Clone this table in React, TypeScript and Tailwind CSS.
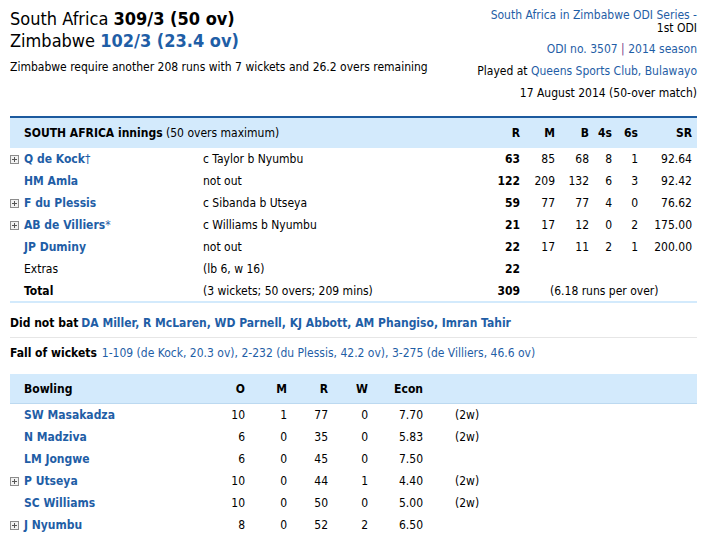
import React from 'react'

const font = "font-['DejaVu_Sans_Condensed','DejaVu_Sans',sans-serif]"
const blue = 'text-[#1f5ea6]'

const Plus = () => (
  <svg width="9" height="9" viewBox="0 0 9 9" className="block">
    <rect x="0.5" y="0.5" width="8" height="8" fill="#f2f2f2" stroke="#8c8c8c" />
    <path d="M2 4.5h5M4.5 2v5" stroke="#555" strokeWidth="1" />
  </svg>
)

type Bat = { name: string; mark?: string; how: string; r: string; m: string; b: string; f: string; s: string; sr: string; plus?: boolean }

const batting: Bat[] = [
  { name: 'Q de Kock', mark: '†', how: 'c Taylor b Nyumbu', r: '63', m: '85', b: '68', f: '8', s: '1', sr: '92.64', plus: true },
  { name: 'HM Amla', how: 'not out', r: '122', m: '209', b: '132', f: '6', s: '3', sr: '92.42' },
  { name: 'F du Plessis', how: 'c Sibanda b Utseya', r: '59', m: '77', b: '77', f: '4', s: '0', sr: '76.62', plus: true },
  { name: 'AB de Villiers', mark: '*', how: 'c Williams b Nyumbu', r: '21', m: '17', b: '12', f: '0', s: '2', sr: '175.00', plus: true },
  { name: 'JP Duminy', how: 'not out', r: '22', m: '17', b: '11', f: '2', s: '1', sr: '200.00' },
]

const bowling = [
  { name: 'SW Masakadza', o: '10', m: '1', r: '77', w: '0', e: '7.70', x: '(2w)' },
  { name: 'N Madziva', o: '6', m: '0', r: '35', w: '0', e: '5.83', x: '(2w)' },
  { name: 'LM Jongwe', o: '6', m: '0', r: '45', w: '0', e: '7.50', x: '' },
  { name: 'P Utseya', o: '10', m: '0', r: '44', w: '1', e: '4.40', x: '(2w)', plus: true },
  { name: 'SC Williams', o: '10', m: '0', r: '50', w: '0', e: '5.00', x: '(2w)' },
  { name: 'J Nyumbu', o: '8', m: '0', r: '52', w: '2', e: '6.50', x: '', plus: true },
]

const NameCell = ({ plus, children, w }: { plus?: boolean; children: React.ReactNode; w: string }) => (
  <div className={`flex items-center ${w}`}>
    <div className="w-[14px]">{plus && <Plus />}</div>
    {children}
  </div>
)

export default function App() {
  return (
    <div className={`w-[710px] h-[544px] bg-white text-black text-[12px] font-stretch-condensed ${font} px-[10px] overflow-hidden`}>
      <div className="flex justify-between">
        <div className="pt-[8px]">
          <div className="text-[18px] leading-[21px]">South Africa <b>309/3 (50 ov)</b></div>
          <div className="text-[18px] leading-[21px] mt-[1px]">Zimbabwe <b className={blue}>102/3 (23.4 ov)</b></div>
          <div className="mt-[9px] leading-[14px]">Zimbabwe require another 208 runs with 7 wickets and 26.2 overs remaining</div>
        </div>
        <div className="text-right pt-[9px] pr-[3px] leading-[13px]">
          <div className={blue}>South Africa in Zimbabwe ODI Series -</div>
          <div>1st ODI</div>
          <div className="mt-[8px]"><span className={blue}>ODI no. 3507</span> <span className="text-[#7b3b8b]">|</span> <span className={blue}>2014 season</span></div>
          <div className="mt-[9px]">Played at <span className={blue}>Queens Sports Club, Bulawayo</span></div>
          <div className="mt-[9px]">17 August 2014 (50-over match)</div>
        </div>
      </div>

      <div className="mt-[16px] w-[687px] border-t-2 border-[#1c5a9e]">
        <div className="flex items-center h-[30px] bg-[#d3eafc]">
          <NameCell w="w-[473px]"><span><b>SOUTH AFRICA innings</b> (50 overs maximum)</span></NameCell>
          <div className="w-[37px] text-right font-bold">R</div>
          <div className="w-[35px] text-right font-bold">M</div>
          <div className="w-[34px] text-right font-bold">B</div>
          <div className="w-[23px] text-right font-bold">4s</div>
          <div className="w-[26px] text-right font-bold">6s</div>
          <div className="w-[54px] text-right font-bold">SR</div>
        </div>
        {batting.map((p) => (
          <div key={p.name} className="flex items-center h-[22px]">
            <NameCell plus={p.plus} w="w-[193px]">
              <span className={`font-bold ${blue}`}>{p.name}{p.mark && <span className="font-normal">{p.mark}</span>}</span>
            </NameCell>
            <div className="w-[280px]">{p.how}</div>
            <div className="w-[37px] text-right font-bold">{p.r}</div>
            <div className="w-[35px] text-right">{p.m}</div>
            <div className="w-[34px] text-right">{p.b}</div>
            <div className="w-[23px] text-right">{p.f}</div>
            <div className="w-[26px] text-right">{p.s}</div>
            <div className="w-[54px] text-right">{p.sr}</div>
          </div>
        ))}
        <div className="flex items-center h-[22px]">
          <NameCell w="w-[193px]"><span>Extras</span></NameCell>
          <div className="w-[280px]">(lb 6, w 16)</div>
          <div className="w-[37px] text-right font-bold">22</div>
        </div>
        <div className="flex items-center h-[23px] pt-[1px] border-b-2 border-[#d3eafc]">
          <NameCell w="w-[193px]"><b>Total</b></NameCell>
          <div className="w-[280px]">(3 wickets; 50 overs; 209 mins)</div>
          <div className="w-[37px] text-right font-bold">309</div>
          <div className="pl-[30px]">(6.18 runs per over)</div>
        </div>
      </div>

      <div className="w-[687px] flex items-center h-[35px] pt-[6px] border-b border-[#e6e6e6]">
        <b>Did not bat</b>
        <span className={`ml-[3px] font-bold ${blue}`}>DA Miller, R McLaren, WD Parnell, KJ Abbott, AM Phangiso, Imran Tahir</span>
      </div>
      <div className="flex items-center h-[30px]">
        <b>Fall of wickets</b>
        <span className={`ml-[5px] ${blue}`}>1-109 (de Kock, 20.3 ov), 2-232 (du Plessis, 42.2 ov), 3-275 (de Villiers, 46.6 ov)</span>
      </div>

      <div className="mt-[6px] w-[687px]">
        <div className="flex items-center h-[30px] bg-[#d3eafc] border-b border-[#bcd9f0] font-bold">
          <NameCell w="w-[195px]"><span>Bowling</span></NameCell>
          <div className="w-[40px] text-right">O</div>
          <div className="w-[42px] text-right">M</div>
          <div className="w-[41px] text-right">R</div>
          <div className="w-[40px] text-right">W</div>
          <div className="w-[55px] text-right">Econ</div>
        </div>
        {bowling.map((p) => (
          <div key={p.name} className="flex items-center h-[22px]">
            <NameCell plus={p.plus} w="w-[195px]">
              <span className={`font-bold ${blue}`}>{p.name}</span>
            </NameCell>
            <div className="w-[40px] text-right">{p.o}</div>
            <div className="w-[42px] text-right">{p.m}</div>
            <div className="w-[41px] text-right">{p.r}</div>
            <div className="w-[40px] text-right">{p.w}</div>
            <div className="w-[55px] text-right">{p.e}</div>
            <div className="pl-[32px]">{p.x}</div>
          </div>
        ))}
      </div>
    </div>
  )
}
